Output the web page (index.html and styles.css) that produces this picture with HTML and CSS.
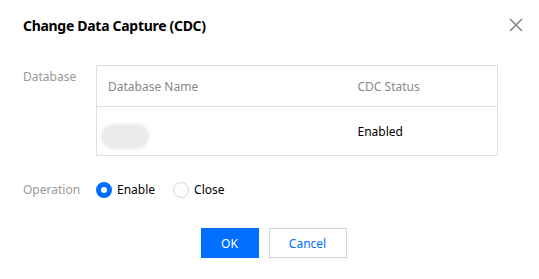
FILE: index.html
```html
<!DOCTYPE html>
<html lang="en">
<head>
  <meta charset="UTF-8" />
  <title>Change Data Capture (CDC)</title>
  <link rel="stylesheet" href="styles.css">
</head>
<body>
  <div class="dialog">
    <div class="dialog-head">
      <h3 class="dialog-title">Change Data Capture (CDC)</h3>
      <button class="dialog-close" type="button" aria-label="Close">
        <svg width="14" height="14" viewBox="0 0 14 14">
          <path d="M1 1 L13 13 M13 1 L1 13" stroke="#888" stroke-width="1.6" fill="none" />
        </svg>
      </button>
    </div>

    <div class="form-row">
      <label class="form-label form-label-top">Database</label>
      <table class="db-table">
        <colgroup>
          <col class="col-name" />
          <col />
        </colgroup>
        <thead>
          <tr>
            <th>Database Name</th>
            <th>CDC Status</th>
          </tr>
        </thead>
        <tbody>
          <tr>
            <td><span class="masked"></span></td>
            <td>Enabled</td>
          </tr>
        </tbody>
      </table>
    </div>

    <div class="form-row form-row-center">
      <label class="form-label">Operation</label>
      <div class="radio-group">
        <label class="radio"><span class="radio-dot checked"></span>Enable</label>
        <label class="radio"><span class="radio-dot"></span>Close</label>
      </div>
    </div>

    <div class="dialog-foot">
      <button class="btn btn-primary" type="button">OK</button>
      <button class="btn btn-weak" type="button">Cancel</button>
    </div>
  </div>
</body>
</html>
```

FILE: styles.css
```css
body {
  margin: 0;
  background: #fff;
  font-family: 'Noto Sans', 'Segoe UI', sans-serif;
  font-size: 12px;
  color: #000;
}
.dialog {
  width: 539px;
  height: 279px;
  padding: 0 23px;
  box-sizing: border-box;
}
.dialog-head {
  display: flex;
  align-items: center;
  justify-content: space-between;
  height: 50px;
}
.dialog-title {
  margin: 0;
  font-size: 14px;
  font-weight: 700;
  letter-spacing: -0.3px;
}
.dialog-close {
  border: none;
  background: none;
  padding: 0;
  width: 14px;
  height: 14px;
  margin-right: -7px;
  cursor: pointer;
  display: flex;
}
.form-row {
  display: flex;
  margin-top: 15px;
}
.form-row-center {
  align-items: center;
  margin-top: 25px;
}
.form-label {
  width: 73px;
  flex: none;
  color: #999;
}
.form-label-top {
  padding-top: 3px;
}
.db-table {
  width: 402px;
  table-layout: fixed;
  border-collapse: collapse;
  border: 1px solid #dcdfe6;
}
.db-table .col-name {
  width: 250px;
}
.db-table th {
  height: 40px;
  text-align: left;
  font-weight: 400;
  color: #888;
  padding: 0 11px;
  border-bottom: 1px solid #dcdfe6;
}
.db-table td {
  height: 48px;
  padding: 0 11px;
}
.masked {
  display: block;
  width: 48px;
  height: 25px;
  margin: 10px 0 0 -7px;
  border-radius: 12px;
  background: #ebebeb;
  filter: blur(1.5px);
}
.radio-group {
  display: flex;
  gap: 18px;
}
.radio {
  display: flex;
  align-items: center;
  gap: 5px;
}
.radio-dot {
  width: 16px;
  height: 16px;
  box-sizing: border-box;
  border-radius: 50%;
  border: 1px solid #cfd5de;
}
.radio-dot.checked {
  border: 5px solid #006eff;
}
.dialog-foot {
  display: flex;
  justify-content: center;
  gap: 10px;
  margin-top: 30px;
  padding-left: 8px;
}
.btn {
  height: 30px;
  font-family: inherit;
  font-size: 12px;
  cursor: pointer;
  border-radius: 0;
}
.btn-primary {
  width: 58px;
  background: #006eff;
  border: 1px solid #006eff;
  color: #fff;
}
.btn-weak {
  width: 78px;
  background: #fff;
  border: 1px solid #cfd5de;
  color: #006eff;
}
```
